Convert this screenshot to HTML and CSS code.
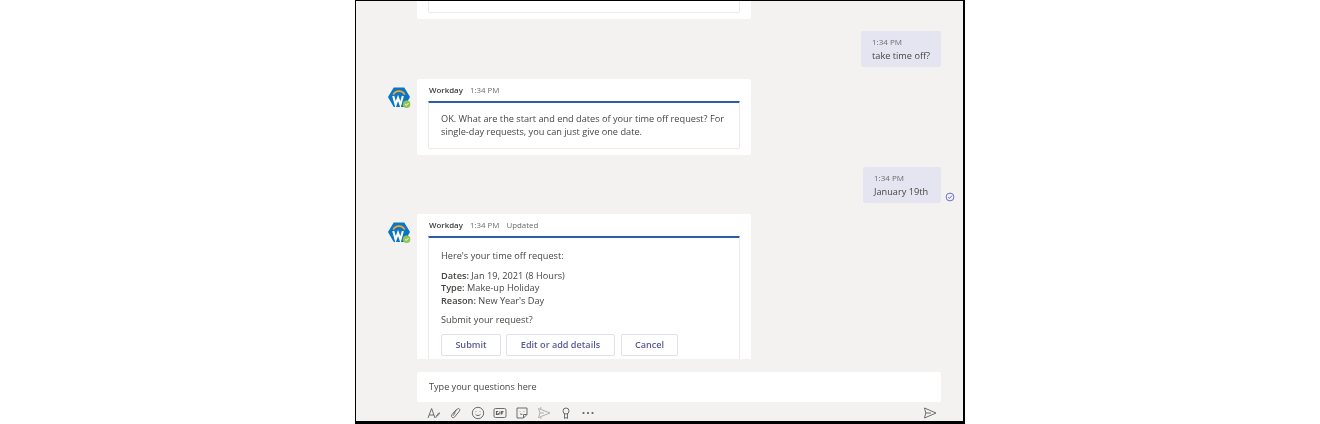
FILE: index.html
```html
<!DOCTYPE html>
<html lang="en">
<head>
<meta charset="utf-8">
<title>Workday chat</title>
<link rel="stylesheet" href="styles.css">
</head>
<body>
<main class="frame">
  <section class="thread">
    <div class="row row-bot row-first">
      <div class="card card-top"><div class="inner inner-top"></div></div>
    </div>
    <div class="row row-me">
      <div class="bubble bubble-a"><div class="meta">1:34 PM</div><div class="msg">take time off?</div></div>
    </div>
    <div class="row row-bot">
      <svg class="avatar" viewBox="0 0 24 24" aria-hidden="true"><use href="#wd"/></svg>
      <div class="card">
        <div class="head"><b>Workday</b><span>1:34 PM</span></div>
        <div class="inner">
          <p>OK. What are the start and end dates of your time off request? For single-day requests, you can just give one date.</p>
        </div>
      </div>
    </div>
    <div class="row row-me">
      <div class="bubble bubble-b"><div class="meta">1:34 PM</div><div class="msg">January 19th</div></div>
      <svg class="seen" viewBox="0 0 10 10" aria-hidden="true"><circle cx="5" cy="5" r="3.9"/><path d="M3.2 5.2 4.5 6.4 6.9 3.7"/></svg>
    </div>
    <div class="row row-bot row-last">
      <svg class="avatar" viewBox="0 0 24 24" aria-hidden="true"><use href="#wd"/></svg>
      <div class="card card-wide">
        <div class="head"><b>Workday</b><span>1:34 PM</span><span>Updated</span></div>
        <div class="inner inner-form">
          <p>Here's your time off request:</p>
          <p class="facts"><b>Dates:</b> Jan 19, 2021 (8 Hours)<br><b>Type:</b> Make-up Holiday<br><b>Reason:</b> New Year's Day</p>
          <p>Submit your request?</p>
          <div class="actions"><button class="btn-submit">Submit</button><button class="btn-edit">Edit or add details</button><button class="btn-cancel">Cancel</button></div>
        </div>
      </div>
    </div>
  </section>
  <section class="composer">
    <div class="input">Type your questions here</div>
    <div class="tools">
      <div class="tool-list">
        <svg viewBox="0 0 14 14"><path d="M1 12 4.6 2.5 8 12M2.2 9h4.8M8.500 11.500c1-.4 3-2.800 4-4 .5-.6-.3-1-.8-.5L9 10.500"/></svg>
        <svg viewBox="0 0 14 14"><path d="M4.300 7.600 8.400 2.900c1-1.100 3.300.4 2.200 1.900L5.700 10.900c-1.900 2-4.300-.2-2.800-2.300L7.400 3.500M6.400 6.700 3.900 9.900"/></svg>
        <svg viewBox="0 0 14 14"><circle cx="7" cy="7" r="5.700"/><path d="M4.500 8.300c1.200 1.700 3.800 1.700 5 0M5 5.200v.6M9 5.200v.6"/></svg>
        <svg viewBox="0 0 14 14"><rect x="1" y="2.500" width="12" height="9" rx="1.500"/><path class="thick" d="M5.200 5.500H3.500v3h1.700V7M6.900 5.500v3M8.600 8.500v-3h1.900M8.600 7h1.500"/></svg>
        <svg viewBox="0 0 14 14"><path d="M2 2h10v6.500L8.500 12H2zM8.500 12V8.500H12M5 5v.5M9 5v.5M5 7.800c.8.600 1.500.7 2.500.4"/></svg>
        <svg class="faded" viewBox="0 0 14 14"><path d="M1.500 2.500 13 7 1.500 11.500 3 7zM3 7h4M3.800 1v2M3.800 11v2"/></svg>
        <svg viewBox="0 0 14 14"><circle cx="7" cy="5" r="3"/><path d="M5.500 7.600v4.900L7 11.500l1.500 1V7.600"/></svg>
        <svg class="more" viewBox="0 0 14 14"><circle cx="2.500" cy="7" r="1.100"/><circle cx="7" cy="7" r="1.100"/><circle cx="11.500" cy="7" r="1.100"/></svg>
      </div>
      <svg class="send" viewBox="0 0 14 14"><path d="M1.500 2 13 7 1.500 12 2.800 7zM2.800 7H8"/></svg>
    </div>
  </section>
</main>
<svg class="defs" width="0" height="0" aria-hidden="true">
  <symbol id="wd" viewBox="0 0 24 24">
    <path d="M6.500 1.500h11L23.500 11.500 17.500 22h-11L.5 11.500z" fill="#0875c9"/>
    <path d="M6 9C8.500 4 15.500 4 18 9" fill="none" stroke="#f5a623" stroke-width="1.800"/>
    <path d="M6 10.500 8.500 19.500l2.500-7 2.500 7 2.500-9" fill="none" stroke="#fff" stroke-width="2.200"/>
    <circle cx="20" cy="19" r="4" fill="#92c353"/>
    <path d="M18.300 19.100 19.600 20.300 21.800 17.900" fill="none" stroke="#fff" stroke-width="1"/>
  </symbol>
</svg>
</body>
</html>
```
FILE: styles.css
```css
* { box-sizing: border-box; }
html, body { margin: 0; height: 424px; overflow: hidden; background: #fff; }
body { font-family: "Open Sans", "Noto Sans", sans-serif; color: #484644; font-size: 9px; }
.frame {
  width: 610px; height: 424px; margin-left: 355px;
  border: solid #000; border-width: 1px 2px 3px 1px;
  background: #f3f2f1; display: flex; flex-direction: column;
}
.thread { height: 358px; overflow: hidden; flex: none; display: flex; flex-direction: column; gap: 12px; filter: blur(.35px); }
.row { display: flex; flex: none; }
.row-bot { padding-left: 31px; align-items: flex-start; }
.row-first { padding-left: 61px; margin-top: -1px; }
.row-me { justify-content: flex-end; padding-right: 22px; position: relative; }
.row-last { margin-top: -1px; }
.avatar { width: 24px; height: 23px; margin-top: 7px; margin-right: 6px; flex: none; }
.card { width: 334px; background: #fff; border-radius: 2px; padding: 0 11px 6px; }
.card-top { height: 19px; }
.head { height: 22px; display: flex; align-items: center; gap: 7px; font-size: 7.900px; color: #6e6d6c; padding: 0 0 1px 1px; }
.head b { font-weight: 600; color: #3f3e3d; }
.inner { border: 1px solid #edebe9; border-top: 2px solid #2a5ea8; border-radius: 0 0 2px 2px; padding: 10px 12px; }
.inner-top { height: 13px; border-top: 0; padding: 0; }
.inner-form { padding-top: 12px; }
.inner p { margin: 0; line-height: 12.500px; font-size: 9.200px; }
.inner p + p { margin-top: 7px; }
.inner b { font-weight: 600; }
.bubble { background: #e5e5f1; border-radius: 2px; height: 36px; padding: 4.500px 11px 0; white-space: nowrap; }
.bubble-a { width: 80px; }
.bubble-b { width: 78px; }
.meta { font-size: 8px; color: #6e6d6c; line-height: 11px; }
.msg { font-size: 9.200px; line-height: 13px; margin-top: 2.500px; }
.seen { position: absolute; right: 8px; top: 25px; width: 10px; height: 10px; fill: none; stroke: #5b5fc7; stroke-width: .9; }
.actions { display: flex; gap: 5px; margin-top: 7px; }
.actions button {
  font: 600 9.100px "Open Sans", "Noto Sans", sans-serif; color: #585a96; background: #fff;
  border: 1px solid #e1dfec; border-radius: 2px; height: 22px; padding: 0;
}
.actions .btn-submit { width: 60px; }
.actions .btn-edit { width: 109px; }
.actions .btn-cancel { width: 57px; margin-left: 1px; }
.composer { flex: 1; padding: 13px 22px 0 61px; display: flex; flex-direction: column; filter: blur(.35px); }
.input { height: 30px; background: #fff; border-radius: 2px; padding: 0 12px; line-height: 30px; font-size: 9.100px; }
.tools { display: flex; justify-content: space-between; align-items: center; height: 21px; padding: 0 4px 0 10px; }
.tool-list { display: flex; gap: 8px; }
.tools svg { width: 14px; height: 14px; fill: none; stroke: #5f5e5d; stroke-width: .9; flex: none; }
.tools .faded { stroke: #a9a8a7; }
.tools .more circle { fill: #5f5e5d; stroke: none; }
.tools .thick { stroke-width: 1.100; }
.defs { position: absolute; }
```
